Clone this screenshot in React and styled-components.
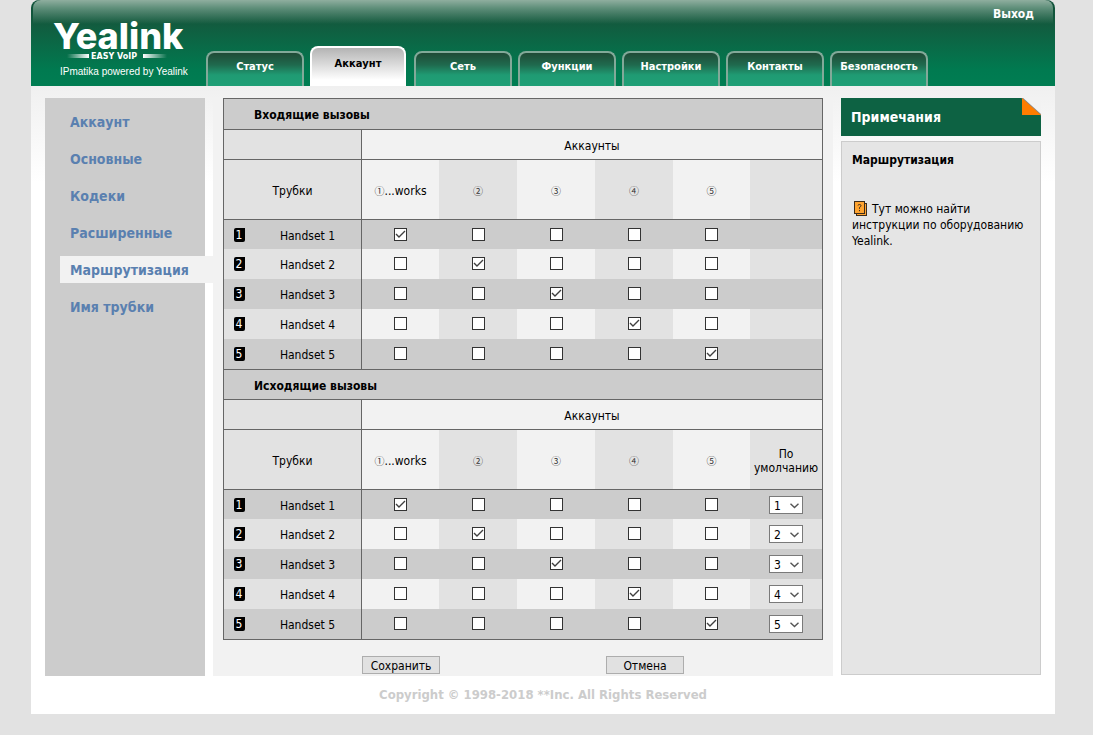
import React, { useState } from 'react'
import styled, { createGlobalStyle, css } from "styled-components";

const tabs = ['Статус', 'Аккаунт', 'Сеть', 'Функции', 'Настройки', 'Контакты', 'Безопасность']
const menus = ['Аккаунт', 'Основные', 'Кодеки', 'Расширенные', 'Маршрутизация', 'Имя трубки']
const accounts = ['①', '②', '③', '④', '⑤']
const handsets = [1, 2, 3, 4, 5]

function Logo() {
  return (
    <LogoBox href="#">
      <svg width="144" height="72" viewBox="0 0 144 72" role="img" aria-label="Yealink Easy VoIP">
        <defs>
          <linearGradient id="barLeft">
            <stop offset="0" stopColor="#fff" stopOpacity="0" />
            <stop offset="1" stopColor="#fff" />
          </linearGradient>
          <linearGradient id="barRight">
            <stop offset="0" stopColor="#fff" />
            <stop offset="1" stopColor="#fff" stopOpacity="0" />
          </linearGradient>
        </defs>
        <text x="0" y="39" fill="#fff" fontFamily="Inter, sans-serif" fontSize="36" fontWeight="800">Yealink</text>
        <rect x="14" y="44" width="22" height="4" fill="url(#barLeft)" />
        <text x="38" y="49" fill="#fff" fontFamily='"DejaVu Sans", sans-serif' fontSize="8" fontWeight="700">EASY VoIP</text>
        <rect x="90" y="44" width="24" height="4" fill="url(#barRight)" />
        <text x="7" y="65" fill="#fff" fontFamily='"Liberation Sans", sans-serif' fontSize="10">IPmatika powered by Yealink</text>
      </svg>
    </LogoBox>
  )
}

function Tick({ label, defaultChecked }) {
  return (
    <TickBox>
      <input type="checkbox" aria-label={label} defaultChecked={defaultChecked} />
      <svg width="13" height="13" viewBox="0 0 13 13" fill="none" stroke="#404040" strokeWidth="1.4">
        <path d="M2 6 L5 9 L11 3" />
      </svg>
    </TickBox>
  )
}

function DefaultSelect({ label, value }) {
  return (
    <SelectBox>
      <select aria-label={label} defaultValue={value}>
        {handsets.map((n) => <option key={n} value={n}>{n}</option>)}
      </select>
      <svg width="9" height="6" viewBox="0 0 9 6" fill="none" stroke="#555" strokeWidth="1.4">
        <path d="M0.5 0.8 L4.5 4.6 L8.5 0.8" />
      </svg>
    </SelectBox>
  )
}

function CallRows({ title, withDefault }) {
  return (
    <tbody>
      <tr>
        <TitleCell colSpan="8" scope="colgroup">{title}</TitleCell>
      </tr>
      <tr>
        <HeadCell colSpan="2" $name $line />
        <HeadCell colSpan="6" $light $line>Аккаунты</HeadCell>
      </tr>
      <TallRow>
        <HeadCell colSpan="2" $name $line>Трубки</HeadCell>
        {accounts.map((mark, i) => (
          <HeadCell key={mark} $light={i % 2 === 0} $line>
            <Mark>{mark}</Mark>{i === 0 && '...works'}
          </HeadCell>
        ))}
        <HeadCell $line>{withDefault && 'По умолчанию'}</HeadCell>
      </TallRow>
      {handsets.map((n, row) => (
        <tr key={n}>
          <Cell $dark={row % 2 === 0} $line={row === 0}><Badge>{n}</Badge></Cell>
          <Cell $dark={row % 2 === 0} $line={row === 0} $name>Handset {n}</Cell>
          {accounts.map((mark, i) => (
            <TickCell key={mark} $dark={row % 2 === 0} $light={i % 2 === 0} $line={row === 0}>
              <Tick label={`${title}: Handset ${n}, ${i + 1}`} defaultChecked={i === row} />
            </TickCell>
          ))}
          <Cell $dark={row % 2 === 0} $line={row === 0}>
            {withDefault && <DefaultSelect label={`По умолчанию, Handset ${n}`} value={n} />}
          </Cell>
        </tr>
      ))}
    </tbody>
  )
}

function App() {
  const [tab, setTab] = useState('Аккаунт')
  const [menu, setMenu] = useState('Маршрутизация')

  return (
    <>
      <GlobalStyle />
      <Page>
        {/* 상단 */}
        <Header>
          <Logo />
          <Tabs>
            {tabs.map((name) => (
              <Tab key={name} href="#" $on={name === tab} onClick={() => setTab(name)}>{name}</Tab>
            ))}
          </Tabs>
          <Logout href="#">Выход</Logout>
        </Header>

        <Body>
          {/* 왼쪽 메뉴 */}
          <Side>
            {menus.map((name) => (
              <SideLink key={name} href="#" $on={name === menu} onClick={() => setMenu(name)}>{name}</SideLink>
            ))}
          </Side>

          {/* 라우팅 테이블 */}
          <Main>
            <Table>
              <colgroup>
                <col width="30" />
                <col width="108" />
                <col width="77" />
                <col width="78" />
                <col width="78" />
                <col width="78" />
                <col width="77" />
                <col />
              </colgroup>
              <CallRows title="Входящие вызовы" />
              <CallRows title="Исходящие вызовы" withDefault />
            </Table>
            <Actions>
              <Button type="button">Сохранить</Button>
              <Button type="button">Отмена</Button>
            </Actions>
          </Main>

          {/* 도움말 */}
          <Notes>
            <NotesTitle>
              Примечания
              <svg width="20" height="18" viewBox="0 0 20 18">
                <path d="M1 0 H20 V17 Z" fill="#f2f2f2" />
                <path d="M1 0 L20 17" stroke="#8a8a8a" strokeWidth="1.5" />
                <path d="M1 0 V17 H20 Z" fill="#ff7d00" />
              </svg>
            </NotesTitle>
            <NotesBody>
              <h3>Маршрутизация</h3>
              <p>
                <svg width="18" height="16" viewBox="0 0 18 16">
                  <rect x="4.5" y="3.5" width="10" height="12" fill="#ffa430" stroke="#3c2c1c" />
                  <rect x="2.5" y="1.5" width="10" height="12" fill="#ffa430" stroke="#3c2c1c" />
                  <path d="M6 5.5 Q6 4.5 7.5 4.5 Q9 4.5 9 5.7 Q9 6.6 7.5 7.4 V8.8 M7.5 10 V11.2" fill="none" stroke="#3c2c1c" />
                </svg>
                Тут можно найти инструкции по оборудованию Yealink.
              </p>
            </NotesBody>
          </Notes>
        </Body>
        <Footer>Copyright © 1998-2018 **Inc. All Rights Reserved</Footer>
      </Page>
    </>
  )
}

export default App

const GlobalStyle = createGlobalStyle`
  * {
    box-sizing: border-box;
  }
  body {
    margin: 0;
    padding: 0 38px 21px 31px;
    background: #e2e2e2;
    color: #000;
    font: 12px/16px "DejaVu Sans Condensed", "DejaVu Sans", sans-serif;
  }
  a {
    text-decoration: none;
  }
`

const Page = styled.div`
  max-width: 1024px;
  margin: 0 auto;
  background: #fff;
`

// 상단 헤더 css
const Header = styled.header`
  position: relative;
  display: flex;
  height: 86px;
  border-radius: 8px 8px 0 0;
  background: linear-gradient(#0f4f38 0, #135a3e 22px, #007a50 70px, #007d52 86px);
  box-shadow: 0 -8px 0 #e2e2e2;

  &::before {
    content: '';
    position: absolute;
    inset: 0 2px auto 2px;
    height: 24px;
    border-radius: 8px 8px 0 0;
    background: linear-gradient(#8fae9f, #5f8f7a 8px, rgba(19, 90, 62, 0));
  }
`

const LogoBox = styled.a`
  position: relative;
  width: 175px;
  padding: 10px 0 0 22px;
`

const Tabs = styled.nav`
  position: relative;
  display: flex;
  flex: 1;
  align-items: flex-end;
  gap: 6px;
`

const Tab = styled.a`
  width: 98px;
  height: 35px;
  border: 2px solid #82a999;
  border-bottom: none;
  border-radius: 8px 8px 0 0;
  background: linear-gradient(#1f4a36, #1f6a4e 12px, #1f9b73 22px, #1f9f76);
  color: #fff;
  font-size: 11px;
  font-weight: bold;
  line-height: 28px;
  text-align: center;
  white-space: nowrap;

  ${({ $on }) => $on && css`
    width: 96px;
    height: 40px;
    margin-right: 2px;
    border-color: #fff;
    background: linear-gradient(#b4b4b4, #fff 32px);
    color: #000;
    line-height: 32px;
  `}
`

const Logout = styled.a`
  position: relative;
  padding: 6px 21px 0 0;
  color: #fff;
  font-weight: bold;
`

const Body = styled.div`
  display: flex;
  gap: 8px;
  padding: 12px 14px 0;
  background: linear-gradient(#f0f0f0, #fff 96px);
`

// 왼쪽 메뉴 css
const Side = styled.nav`
  display: flex;
  flex-direction: column;
  gap: 10px;
  width: 160px;
  padding: 10px 0 0 15px;
  background: #ccc;
`

const SideLink = styled.a`
  padding: 2px 0 0 10px;
  color: #5a80b0;
  font-size: 14px;
  font-weight: bold;
  line-height: 25px;

  ${({ $on }) => $on && css`
    margin-right: -8px;
    background: #f2f2f2;
  `}
`

const Main = styled.main`
  flex: 1;
  padding: 0 10px 2px;
  background: #f2f2f2;
`

// 테이블 css
const Table = styled.table`
  width: 100%;
  border: 1px solid #666;
  border-spacing: 0;
  table-layout: fixed;

  tr {
    height: 30px;
  }
`

const TallRow = styled.tr`
  && {
    height: 60px;
  }
`

const Cell = styled.td`
  padding: ${({ $name }) => ($name ? '2px 0 0' : '0')};
  border-top: ${({ $line }) => ($line ? '1px solid #666' : 'none')};
  border-right: ${({ $name }) => ($name ? '1px solid #666' : 'none')};
  background: ${({ $dark, $light }) => ($dark ? '#ccc' : $light ? '#f2f2f2' : '#e2e2e2')};
  text-align: center;
`

const TickCell = styled(Cell)`
  padding-bottom: ${({ $line }) => ($line ? '0' : '2px')};
`

const HeadCell = styled(Cell).attrs({ as: 'th' })`
  padding-top: 2px;
  font-weight: normal;
  line-height: 14px;
`

const TitleCell = styled.th`
  padding: 2px 0 0 30px;
  background: #ccc;
  text-align: left;

  tbody + tbody & {
    border-top: 1px solid #666;
  }
`

const Mark = styled.span`
  color: #333;
  font-family: "Noto Sans CJK SC", sans-serif;
  font-size: 10px;
`

const Badge = styled.span`
  display: block;
  width: 11px;
  margin: 0 auto;
  border-radius: 2px 0 2px 2px;
  background: #000;
  color: #fff;
  font-size: 12px;
  line-height: 14px;
`

const TickBox = styled.label`
  display: grid;
  justify-content: center;

  input, svg {
    grid-area: 1 / 1;
  }
  input {
    appearance: none;
    width: 13px;
    height: 13px;
    margin: 0;
    border: 1px solid #333;
    background: #fff;
  }
  svg {
    pointer-events: none;
    visibility: hidden;
  }
  input:checked + svg {
    visibility: visible;
  }
`

const SelectBox = styled.div`
  display: grid;
  width: 34px;
  margin: 0 auto;

  select, svg {
    grid-area: 1 / 1;
  }
  select {
    appearance: none;
    height: 18px;
    padding: 1px 0 0 4px;
    border: 1px solid #7a7a7a;
    border-radius: 0;
    background: #fff;
    color: #000;
    font: inherit;
  }
  svg {
    align-self: center;
    justify-self: end;
    margin: 2px 4px 0 0;
    pointer-events: none;
  }
`

// 저장, 취소 버튼 css
const Actions = styled.div`
  display: flex;
  gap: 166px;
  padding: 16px 0 0 139px;
`

const Button = styled.button`
  width: 78px;
  height: 18px;
  padding: 1px 0 0;
  border: 1px solid #adadad;
  background: #e1e1e1;
  color: #000;
  font: inherit;
  cursor: pointer;
`

// 오른쪽 도움말 css
const Notes = styled.aside`
  display: flex;
  flex-direction: column;
  gap: 5px;
  width: 200px;
  padding-bottom: 1px;
`

const NotesTitle = styled.h2`
  display: flex;
  justify-content: space-between;
  height: 38px;
  margin: 0;
  padding-left: 10px;
  background: #0d6243;
  color: #fff;
  font-size: 14px;
  line-height: 38px;
`

const NotesBody = styled.div`
  flex: 1;
  padding: 10px;
  border: 1px solid #ccc;
  background: #e5e5e5;

  h3 {
    margin: 0 0 32px;
    font-size: 12px;
  }
  p {
    margin: 0;
  }
  svg {
    margin-right: 2px;
    vertical-align: text-bottom;
  }
`

const Footer = styled.footer`
  padding: 11px 0;
  color: #ccc;
  font-size: 13px;
  font-weight: bold;
  text-align: center;
`
